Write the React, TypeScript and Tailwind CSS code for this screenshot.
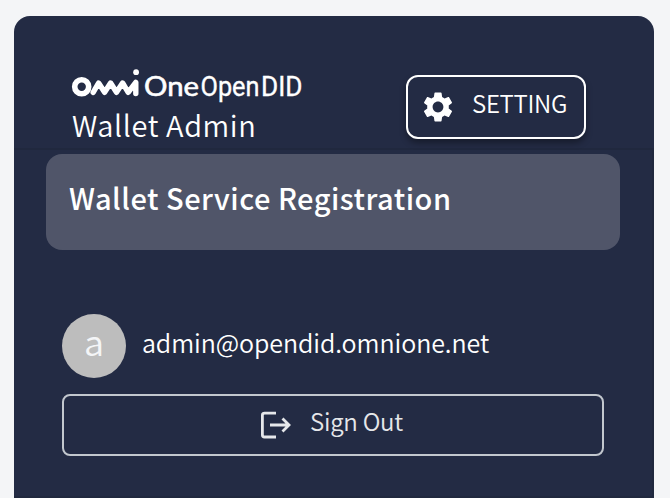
import React from "react";

function Logo() {
  return (
    <svg width="234" height="38" viewBox="70 66 234 38" fill="none" className="block max-w-none shrink-0" aria-label="Omni OneOpenDID">
      <ellipse cx="81.7" cy="86.8" rx="7" ry="7" stroke="#fff" strokeWidth="5.6" />
      <path
        d="M93.2 92.3 L98.6 83 L104.6 92.3 L110.6 83 L116.5 92.3 L122.6 83 L128.2 92.3 L135.8 82.3 V93.5"
        stroke="#fff"
        strokeWidth="5.4"
        strokeLinecap="round"
        strokeLinejoin="round"
      />
      <circle cx="136.1" cy="72.2" r="2.9" fill="#fff" />
      <g fill="#fff" stroke="#fff">
        <text x="144" y="96.3" fontSize="27" strokeWidth="0.6" fontFamily="Lato, sans-serif" fontWeight="400" textLength="55" lengthAdjust="spacingAndGlyphs">One</text>
        <text x="200.5" y="96.3" fontSize="27" strokeWidth="0.35" fontFamily="Roboto, sans-serif" textLength="59" lengthAdjust="spacingAndGlyphs">Open</text>
        <text x="261" y="96.3" fontSize="27" strokeWidth="0.35" fontFamily="Roboto, sans-serif" textLength="41.5" lengthAdjust="spacingAndGlyphs">DID</text>
      </g>
    </svg>
  );
}

function GearIcon() {
  return (
    <svg width="36" height="36" viewBox="0 0 24 24" fill="#fff">
      <path d="M19.14 12.94c.04-.3.06-.61.06-.94 0-.32-.02-.64-.07-.94l2.03-1.58c.18-.14.23-.41.12-.61l-1.92-3.32c-.12-.22-.37-.29-.59-.22l-2.39.96c-.5-.38-1.03-.7-1.62-.94l-.36-2.54c-.04-.24-.24-.41-.48-.41h-3.84c-.24 0-.43.17-.47.41l-.36 2.54c-.59.24-1.13.57-1.62.94l-2.39-.96c-.22-.08-.47 0-.59.22L2.74 8.87c-.12.21-.08.47.12.61l2.03 1.58c-.05.3-.09.63-.09.94s.02.64.07.94l-2.03 1.58c-.18.14-.23.41-.12.61l1.92 3.32c.12.22.37.29.59.22l2.39-.96c.5.38 1.03.7 1.62.94l.36 2.54c.05.24.24.41.48.41h3.84c.24 0 .44-.17.47-.41l.36-2.54c.59-.24 1.13-.56 1.62-.94l2.39.96c.22.08.47 0 .59-.22l1.92-3.32c.12-.22.07-.47-.12-.61zM12 15.6c-1.98 0-3.6-1.62-3.6-3.6s1.62-3.6 3.6-3.6 3.6 1.62 3.6 3.6-1.62 3.6-3.6 3.6" />
    </svg>
  );
}

function SignOutIcon() {
  return (
    <svg width="32" height="32" viewBox="0 0 32 32" fill="none" stroke="#e5e7ea" strokeWidth="2.8">
      <path d="M16 4.2H4.5Q2.4 4.2 2.4 6V26Q2.4 28 4.5 28H16" />
      <path d="M10 16H29M22.5 9.5L29 16L22.5 22.5" />
    </svg>
  );
}

export default function App() {
  return (
    <div className="h-[498px] w-[670px] overflow-hidden bg-[#f4f5f7] pt-4 pl-3.5 font-['Noto_Sans_CJK_KR',sans-serif] text-white">
      <div className="flex h-[482px] w-[640px] flex-col overflow-hidden rounded-t-2xl bg-[#232b44]">
        <header className="flex h-[134px] shrink-0 justify-between border-b-2 border-[#20283e] pr-[68px] pl-14">
          <div className="flex flex-col pt-[50px]">
            <Logo />
            <div className="-mt-1 pl-0.5 text-[29px] leading-[48px] font-[350] tracking-[0.6px] whitespace-nowrap">Wallet Admin</div>
          </div>
          <button className="mt-[59px] flex h-16 w-[180px] items-center rounded-xl border-2 border-white pl-3 shadow-[0_4px_6px_rgba(0,0,0,0.35)]">
            <GearIcon />
            <span className="ml-4 pb-2 text-[24px] leading-8 font-[350] tracking-[-0.3px]">SETTING</span>
          </button>
        </header>
        <div className="flex grow flex-col border-r-2 border-b-2 border-[#20283e] pt-1 pl-8">
          <div className="h-24 w-[574px] shrink-0 rounded-2xl bg-[#505569] pt-[19px] pl-[23px] text-[29px] leading-[48px] font-medium tracking-[0.5px] whitespace-nowrap">
            Wallet Service Registration
          </div>
          <div className="mt-16 flex h-16 items-center pl-4">
            <div className="flex h-16 w-16 items-center justify-center rounded-full bg-[#bdbdbd] pb-3 text-[36px] leading-none font-[350] text-[#f4f5f7]">a</div>
            <span className="ml-4 pb-2 text-[25px] leading-10 font-[350] tracking-[-0.08px] whitespace-nowrap">admin@opendid.omnione.net</span>
          </div>
          <button className="mt-4 ml-4 flex h-[62px] w-[542px] items-center rounded-lg border-2 border-[#c2c7ce] pl-[196px] text-[#e5e7ea]">
            <SignOutIcon />
            <span className="ml-[18px] pb-2 text-[24px] leading-8 font-[350] tracking-[-0.25px] whitespace-nowrap">Sign Out</span>
          </button>
        </div>
      </div>
    </div>
  );
}
